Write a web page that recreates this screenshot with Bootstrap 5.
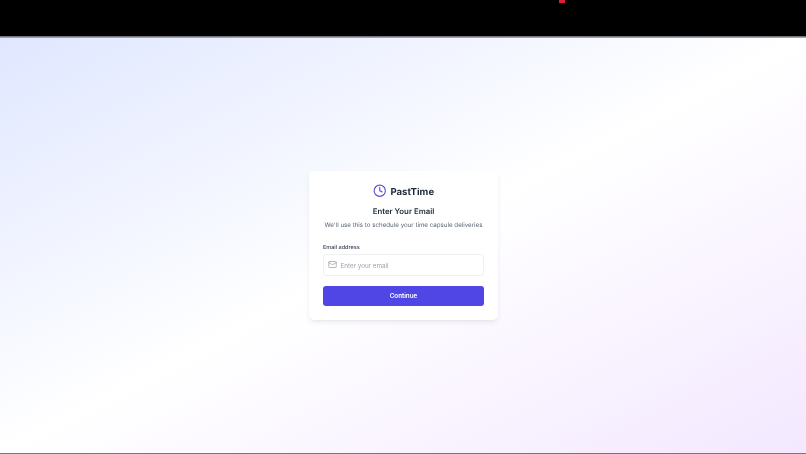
<!DOCTYPE html>
<html lang="en">
<head>
<meta charset="utf-8">
<title>PastTime</title>
<link href="https://cdn.jsdelivr.net/npm/bootstrap@5.3.0/dist/css/bootstrap.min.css" rel="stylesheet">
<style>
html,body{height:100%;}
body{font-family:Inter,"Liberation Sans",sans-serif;background:#000;overflow:hidden;text-rendering:geometricPrecision;}
.top-strip{height:36px;background:#000;flex:none;}
.red-tick{width:6px;height:3px;background:#e11d36;margin-left:559px;}
.divider-line{height:2px;flex:none;background:linear-gradient(#5d5d63,#b9bac0);}
.stage{flex:1 1 auto;background:linear-gradient(to bottom right,#e0e7ff 0%,#ffffff 50%,#f3e8ff 100%);}
.bottom-line{height:1px;flex:none;background:#77757d;}
.login-box{width:189px;height:149px;margin-top:133px;border:0;border-radius:5px;padding:14px;background:#fff;box-shadow:0 3px 6px -1px rgba(0,0,0,.08),0 1px 3px -1px rgba(0,0,0,.07);will-change:transform;}
.brand-row{height:13px;margin-bottom:6.5px;gap:4px;}
.brand-row svg{margin-bottom:1px;}
.brand-name{font-size:9.6px;font-weight:700;color:#1f2937;line-height:13px;padding-top:1px;}
.box-title{font-size:7.8px;font-weight:600;color:#1f2937;line-height:13px;margin:0 0 1px;}
.box-sub{font-size:6.2px;color:#5b6472;line-height:13px;margin:0 0 12.5px;white-space:nowrap;}
.field-label{font-size:5.5px;font-weight:500;color:#374151;line-height:8px;margin-bottom:2px;display:block;}
.field-wrap{height:22px;border:1px solid #eef0f3;border-radius:3px;padding:0 4px;gap:3.5px;margin-bottom:10px;}
.mail-ico{flex:none;margin-bottom:2px;}
.field-wrap input{border:0;outline:0;padding:2px 0 0;font-size:6.3px;line-height:10px;height:14px;color:#374151;width:100%;min-width:0;background:transparent;font-family:inherit;}
.field-wrap input::placeholder{color:#9ca3af;opacity:1;}
.go-btn{height:20px;padding:1px 0 0;font-size:6.3px;font-weight:600;line-height:19px;border:0;border-radius:3px;background:#4f46e5;color:#fff;}
.go-btn:hover{background:#4338ca;color:#fff;}
</style>
</head>
<body class="d-flex flex-column">
<div class="top-strip"><div class="red-tick"></div></div>
<div class="divider-line"></div>
<main class="stage d-flex justify-content-center align-items-start">
  <div class="card login-box">
    <div class="brand-row d-flex justify-content-center align-items-center">
      <svg width="13.5" height="13.5" viewBox="0 0 24 24" fill="none" stroke="#5b50d6" stroke-width="2" stroke-linecap="round" stroke-linejoin="round" aria-hidden="true"><circle cx="12" cy="12" r="10"/><path d="M12 6v6l4 2"/></svg>
      <span class="brand-name">PastTime</span>
    </div>
    <h1 class="box-title text-center">Enter Your Email</h1>
    <p class="box-sub text-center">We'll use this to schedule your time capsule deliveries</p>
    <form>
      <label class="field-label" for="em">Email address</label>
      <div class="field-wrap d-flex align-items-center">
        <svg class="mail-ico" width="9" height="9" viewBox="0 0 24 24" fill="none" stroke="#9ca3af" stroke-width="2" stroke-linecap="round" stroke-linejoin="round" aria-hidden="true"><rect x="2" y="4" width="20" height="16" rx="2"/><path d="m22 7-10 6L2 7"/></svg>
        <input id="em" type="email" placeholder="Enter your email">
      </div>
      <button type="button" class="btn go-btn d-block w-100">Continue</button>
    </form>
  </div>
</main>
<div class="bottom-line"></div>
<script src="https://cdn.jsdelivr.net/npm/bootstrap@5.3.0/dist/js/bootstrap.bundle.min.js"></script>
</body>
</html>
